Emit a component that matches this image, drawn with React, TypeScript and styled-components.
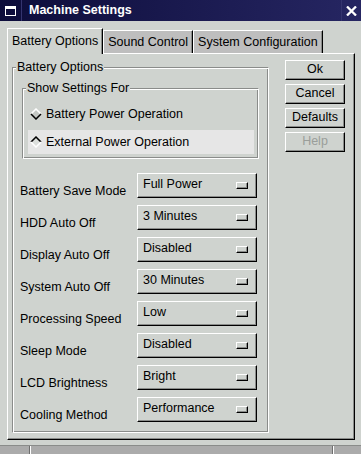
import React from "react";
import styled, { createGlobalStyle } from "styled-components";

const BG = "#cfd3cf";
const SHADOW = "#8a8c8a";

const GlobalStyle = createGlobalStyle`
  html, body {
    margin: 0;
    padding: 0;
  }
  body {
    background: ${BG};
    font-family: "Liberation Sans", Arial, Helvetica, sans-serif;
    font-size: 12.5px;
    color: #000;
  }
  * {
    box-sizing: border-box;
  }
`;

const Window = styled.div`
  width: 361px;
  height: 454px;
  display: flex;
  flex-direction: column;
  background: ${BG};
  overflow: hidden;
`;

const TitleBar = styled.div`
  height: 21px;
  display: flex;
  align-items: stretch;
  background: linear-gradient(to right, #0d0d3b, #262662);
  color: #fff;
`;

const TitleButton = styled.div<{ $side: "left" | "right" }>`
  width: ${(p) => (p.$side === "left" ? 22 : 20)}px;
  display: flex;
  align-items: center;
  justify-content: center;
  ${(p) =>
    p.$side === "left"
      ? "border-right: 1px solid #34346e;"
      : "border-left: 1px solid #34346e;"}
`;

const TitleText = styled.div`
  flex: 1;
  padding-left: 7px;
  font-weight: bold;
  line-height: 21px;
  white-space: nowrap;
`;

const Body = styled.div`
  flex: 1;
  display: flex;
  flex-direction: column;
  padding: 7px 6px 5px 7px;
`;

const TabStrip = styled.div`
  display: flex;
  align-items: flex-end;
`;

const Tab = styled.div<{ $active?: boolean }>`
  position: relative;
  z-index: ${(p) => (p.$active ? 1 : 0)};
  height: ${(p) => (p.$active ? 26 : 23)}px;
  margin-bottom: ${(p) => (p.$active ? -1 : 0)}px;
  padding: ${(p) => (p.$active ? 5 : 4)}px 4px 0;
  background: ${(p) => (p.$active ? BG : "#bebebe")};
  border-top: 1px solid #fff;
  border-left: 1px solid #fff;
  border-right: 1px solid #000;
  box-shadow: inset -1px 0 0 ${SHADOW};
  line-height: 15px;
  white-space: nowrap;
`;

const TabPage = styled.div`
  flex: 1;
  display: flex;
  align-items: flex-start;
  padding: 6px 0 0 4px;
  border: 1px solid;
  border-color: #fff #000 #000 #fff;
  box-shadow: inset -1px -1px 0 ${SHADOW};
`;

const FrameBox = styled.div<{ $width: number }>`
  position: relative;
  width: ${(p) => p.$width}px;
  border: 1px solid;
  border-color: ${SHADOW} #fff #fff ${SHADOW};
  box-shadow: inset 1px 1px 0 #fff, inset -1px -1px 0 ${SHADOW};
`;

const FrameLabel = styled.span`
  position: absolute;
  top: -8px;
  left: 3px;
  padding: 0 1px;
  background: ${BG};
  line-height: 15px;
  white-space: nowrap;
`;

const OptionsFrame = styled(FrameBox)`
  margin-top: 7px;
  padding: 20px 0 10px 7px;
`;

const ShowFrame = styled(FrameBox)`
  margin-left: 2px;
  padding: 13px 4px 4px 5px;
`;

const RadioList = styled.div`
  display: flex;
  flex-direction: column;
  gap: 4px;
`;

const RadioRow = styled.div<{ $hover?: boolean }>`
  height: 24px;
  display: flex;
  align-items: center;
  gap: 4px;
  padding-left: 2px;
  background: ${(p) => (p.$hover ? "#e6e6e6" : "transparent")};
  line-height: 15px;
  white-space: nowrap;
`;

const SettingsList = styled.div`
  margin-top: 14px;
  display: flex;
  flex-direction: column;
  gap: 7px;
`;

const SettingRow = styled.div`
  display: grid;
  grid-template-columns: 117px 120px;
  align-items: end;
`;

const SettingLabel = styled.span`
  line-height: 14px;
  white-space: nowrap;
`;

const Combo = styled.div`
  height: 25px;
  display: flex;
  align-items: flex-start;
  justify-content: space-between;
  padding: 3px 8px 0 5px;
  border: 1px solid;
  border-color: #fff #000 #000 #fff;
  box-shadow: inset -1px -1px 0 ${SHADOW};
  line-height: 15px;
  white-space: nowrap;
`;

const ComboIndicator = styled.span`
  width: 12px;
  height: 7px;
  margin-top: 5px;
  border: 1px solid;
  border-color: #fff #000 #000 #fff;
  box-shadow: inset -1px -1px 0 ${SHADOW};
`;

const ButtonColumn = styled.div`
  margin-left: 16px;
  width: 60px;
  display: flex;
  flex-direction: column;
  gap: 4px;
`;

const PushButton = styled.div<{ $disabled?: boolean }>`
  height: 20px;
  border: 1px solid;
  border-color: #fff #000 #000 #fff;
  box-shadow: inset -1px -1px 0 ${SHADOW};
  text-align: center;
  line-height: 17px;
  color: ${(p) => (p.$disabled ? "#9a9e9a" : "#000")};
`;

const StatusBar = styled.div`
  height: 9px;
  display: flex;
  border-top: 1px solid ${SHADOW};
  background: #ababab;
`;

const StatusCell = styled.div<{ $width?: number }>`
  ${(p) => (p.$width ? `width: ${p.$width}px;` : "flex: 1;")}
  border-right: 1px solid #6e6e6e;
  box-shadow: 1px 0 0 #fff;
  &:last-child {
    border-right: none;
    box-shadow: none;
  }
`;

const Diamond = ({ selected }: { selected?: boolean }) => {
  const top = selected ? "#000" : "#fff";
  const bottom = selected ? "#fff" : "#000";
  return (
    <svg width="12" height="12" viewBox="0 0 12 12">
      <polygon points="1.5,6 6,1.5 10.5,6 6,10.5" fill={selected ? "#dcdfdc" : "#c4c8c4"} />
      <polyline points="1,6 6,1 11,6" fill="none" stroke={top} strokeWidth="1.5" />
      <polyline points="1,6 6,11 11,6" fill="none" stroke={bottom} strokeWidth="1.5" />
    </svg>
  );
};

const settings = [
  ["Battery Save Mode", "Full Power"],
  ["HDD Auto Off", "3 Minutes"],
  ["Display Auto Off", "Disabled"],
  ["System Auto Off", "30 Minutes"],
  ["Processing Speed", "Low"],
  ["Sleep Mode", "Disabled"],
  ["LCD Brightness", "Bright"],
  ["Cooling Method", "Performance"],
];

const App = () => {
  return (
    <>
      <GlobalStyle />
      <Window>
        <TitleBar>
          <TitleButton $side="left">
            <svg width="12" height="11" viewBox="0 0 12 11">
              <rect x="0.5" y="1.5" width="10" height="9" fill="none" stroke="#fff" />
              <rect x="0" y="1" width="11" height="3" fill="#fff" />
            </svg>
          </TitleButton>
          <TitleText>Machine Settings</TitleText>
          <TitleButton $side="right">
            <svg width="11" height="10" viewBox="0 0 11 10">
              <path d="M1 0.5 L10 9.5 M10 0.5 L1 9.5" stroke="#fff" strokeWidth="2.3" />
            </svg>
          </TitleButton>
        </TitleBar>

        <Body>
          <TabStrip>
            <Tab $active>Battery Options</Tab>
            <Tab>Sound Control</Tab>
            <Tab>System Configuration</Tab>
          </TabStrip>

          <TabPage>
            <OptionsFrame $width={257}>
              <FrameLabel>Battery Options</FrameLabel>

              <ShowFrame $width={237}>
                <FrameLabel>Show Settings For</FrameLabel>
                <RadioList>
                  <RadioRow>
                    <Diamond />
                    Battery Power Operation
                  </RadioRow>
                  <RadioRow $hover>
                    <Diamond selected />
                    External Power Operation
                  </RadioRow>
                </RadioList>
              </ShowFrame>

              <SettingsList>
                {settings.map(([label, value]) => (
                  <SettingRow key={label}>
                    <SettingLabel>{label}</SettingLabel>
                    <Combo>
                      {value}
                      <ComboIndicator />
                    </Combo>
                  </SettingRow>
                ))}
              </SettingsList>
            </OptionsFrame>

            <ButtonColumn>
              <PushButton>Ok</PushButton>
              <PushButton>Cancel</PushButton>
              <PushButton>Defaults</PushButton>
              <PushButton $disabled>Help</PushButton>
            </ButtonColumn>
          </TabPage>
        </Body>

        <StatusBar>
          <StatusCell $width={30} />
          <StatusCell $width={303} />
          <StatusCell />
        </StatusBar>
      </Window>
    </>
  );
};

export default App;
